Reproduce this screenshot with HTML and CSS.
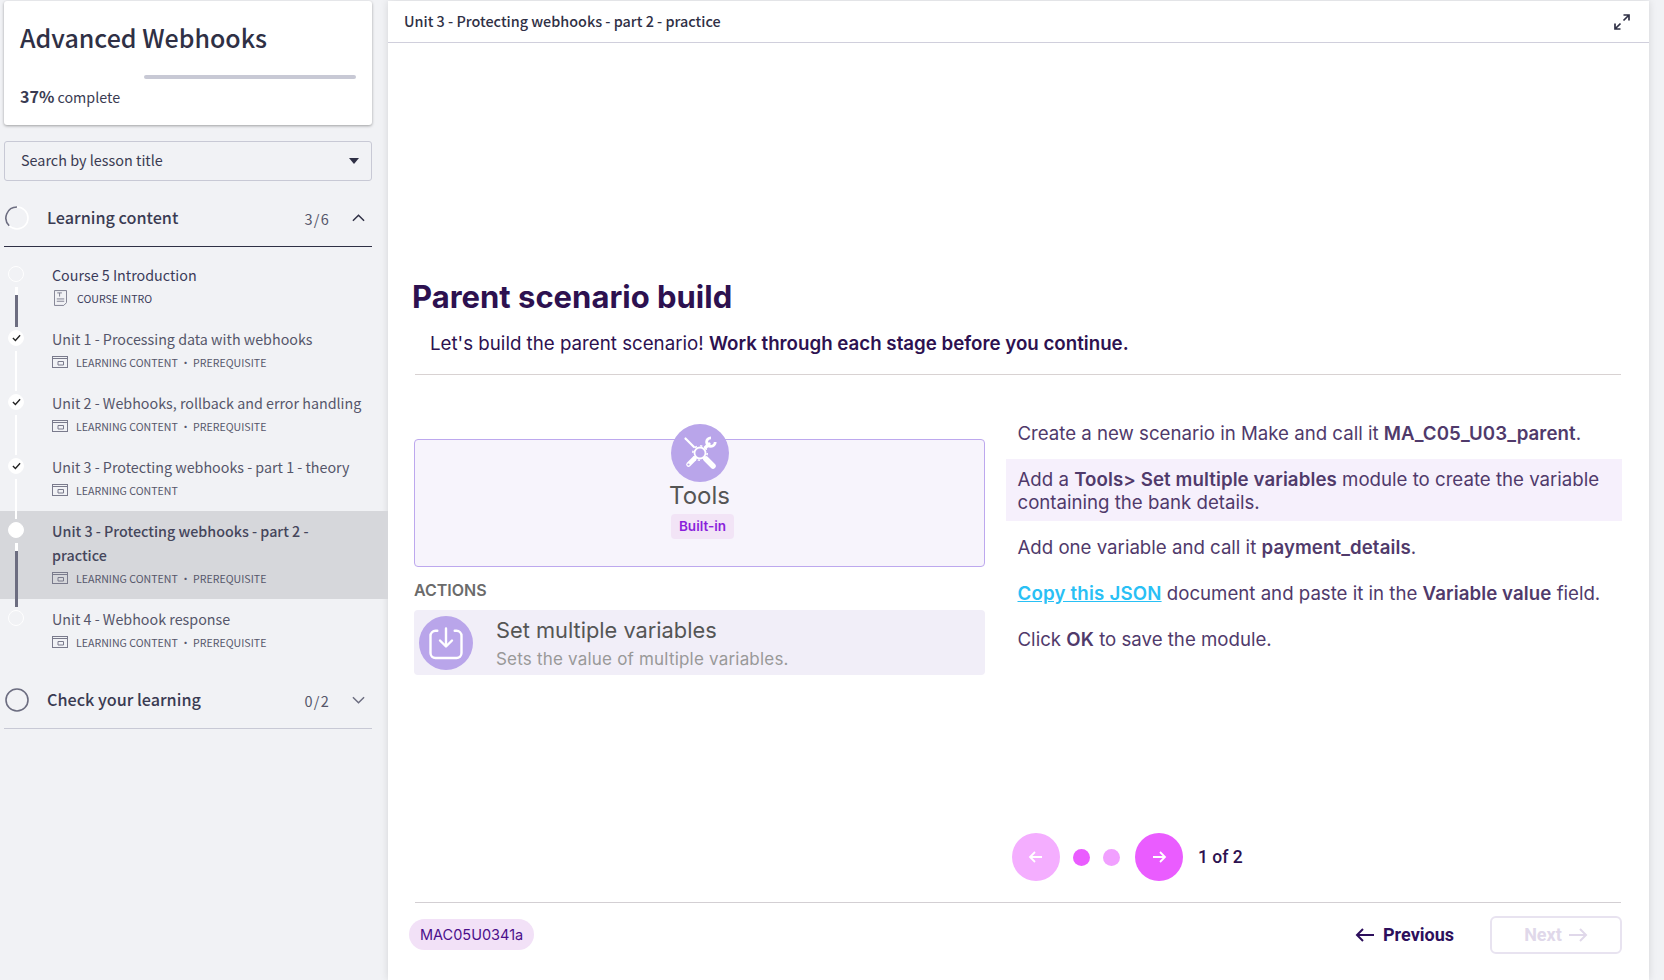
FILE: index.html
```html
<!DOCTYPE html>
<html lang="en">
<head>
    <meta charset="UTF-8">
    <meta name="viewport" content="width=device-width, initial-scale=1.0">
    <title>Advanced Webhooks</title>
    <link rel="stylesheet" href="styles.css">
</head>
<body>

    <aside class="sidebar">
        <div class="course-card">
            <h2>Advanced Webhooks</h2>
            <div class="progress-track"></div>
            <p class="progress-text"><b>37%</b> complete</p>
        </div>

        <div class="search-box">
            <span>Search by lesson title</span>
            <i class="caret"></i>
        </div>

        <div class="section-head">
            <svg class="ring" viewBox="0 0 24 24"><circle cx="12" cy="12" r="11" fill="none" stroke="#fff" stroke-width="1.6"/><path d="M12 1A11 11 0 0 0 4.2 19.8" fill="none" stroke="#6c6d80" stroke-width="1.6"/></svg>
            <span class="section-title">Learning content</span>
            <span class="section-count">3/6</span>
            <svg class="chevron" viewBox="0 0 14 8"><path d="M1 7l6-6 6 6" fill="none" stroke="#2f3045" stroke-width="1.6"/></svg>
        </div>

        <ul class="lessons">
            <li class="lesson lesson-first">
                <span class="dot"></span><span class="line line-dark"></span>
                <div class="lesson-title">Course 5 Introduction</div>
                <div class="lesson-meta">
                    <svg class="doc-icon" viewBox="0 0 14 17"><path d="M.5.5h13v13l-3 3H.5z" fill="none" stroke="#7a7b8c"/><path d="M3.500 3h5M6 3v4M3 9.500h8M3 12h8" fill="none" stroke="#7a7b8c"/></svg>
                    COURSE INTRO
                </div>
            </li>
            <li class="lesson">
                <span class="dot dot-done"><svg viewBox="0 0 10 8"><path d="M1 4l2.800 2.800L9 1" fill="none" stroke="#222" stroke-width="1.500"/></svg></span><span class="line"></span>
                <div class="lesson-title">Unit 1 - Processing data with webhooks</div>
                <div class="lesson-meta">
                    <svg class="slide-icon" viewBox="0 0 16 12"><rect x=".5" y=".5" width="15" height="11" fill="none" stroke="#7a7b8c"/><path d="M.5 2.500h15M6 9h5.500V5.500H6z" fill="none" stroke="#7a7b8c"/></svg>
                    LEARNING CONTENT · PREREQUISITE
                </div>
            </li>
            <li class="lesson">
                <span class="dot dot-done"><svg viewBox="0 0 10 8"><path d="M1 4l2.800 2.800L9 1" fill="none" stroke="#222" stroke-width="1.500"/></svg></span><span class="line"></span>
                <div class="lesson-title">Unit 2 - Webhooks, rollback and error handling</div>
                <div class="lesson-meta">
                    <svg class="slide-icon" viewBox="0 0 16 12"><rect x=".5" y=".5" width="15" height="11" fill="none" stroke="#7a7b8c"/><path d="M.5 2.500h15M6 9h5.500V5.500H6z" fill="none" stroke="#7a7b8c"/></svg>
                    LEARNING CONTENT · PREREQUISITE
                </div>
            </li>
            <li class="lesson">
                <span class="dot dot-done"><svg viewBox="0 0 10 8"><path d="M1 4l2.800 2.800L9 1" fill="none" stroke="#222" stroke-width="1.500"/></svg></span><span class="line"></span>
                <div class="lesson-title">Unit 3 - Protecting webhooks - part 1 - theory</div>
                <div class="lesson-meta">
                    <svg class="slide-icon" viewBox="0 0 16 12"><rect x=".5" y=".5" width="15" height="11" fill="none" stroke="#7a7b8c"/><path d="M.5 2.500h15M6 9h5.500V5.500H6z" fill="none" stroke="#7a7b8c"/></svg>
                    LEARNING CONTENT
                </div>
            </li>
            <li class="lesson lesson-active">
                <span class="dot dot-full"></span><span class="line line-dark line-long"></span>
                <div class="lesson-title">Unit 3 - Protecting webhooks - part 2 - practice</div>
                <div class="lesson-meta">
                    <svg class="slide-icon" viewBox="0 0 16 12"><rect x=".5" y=".5" width="15" height="11" fill="none" stroke="#7a7b8c"/><path d="M.5 2.500h15M6 9h5.500V5.500H6z" fill="none" stroke="#7a7b8c"/></svg>
                    LEARNING CONTENT · PREREQUISITE
                </div>
            </li>
            <li class="lesson">
                <span class="dot"></span>
                <div class="lesson-title">Unit 4 - Webhook response</div>
                <div class="lesson-meta">
                    <svg class="slide-icon" viewBox="0 0 16 12"><rect x=".5" y=".5" width="15" height="11" fill="none" stroke="#7a7b8c"/><path d="M.5 2.500h15M6 9h5.500V5.500H6z" fill="none" stroke="#7a7b8c"/></svg>
                    LEARNING CONTENT · PREREQUISITE
                </div>
            </li>
        </ul>

        <div class="section-head section-closed">
            <svg class="ring" viewBox="0 0 24 24"><circle cx="12" cy="12" r="11" fill="none" stroke="#6c6d80" stroke-width="1.600"/></svg>
            <span class="section-title">Check your learning</span>
            <span class="section-count">0/2</span>
            <svg class="chevron" viewBox="0 0 14 8"><path d="M1 1l6 6 6-6" fill="none" stroke="#6c6d80" stroke-width="1.600"/></svg>
        </div>
    </aside>

    <main class="main">
        <header class="topbar">
            <span>Unit 3 - Protecting webhooks - part 2 - practice</span>
            <svg class="expand" viewBox="0 0 16 16"><path d="M1 15l5.500-5.500M9.500 6.500L15 1M9.500 1H15v5.500M1 9.500V15h5.500" fill="none" stroke="#2f3045" stroke-width="1.700"/></svg>
        </header>

        <section class="slide">
            <h1>Parent scenario build</h1>
            <p class="intro">Let's build the parent scenario! <b>Work through each stage before you continue.</b></p>
            <hr class="rule">

            <div class="columns">
                <div class="module">
                    <div class="module-card">
                        <div class="module-icon">
                            <svg viewBox="0 0 36 36" fill="none" stroke="#fff" stroke-linecap="round">
                                <path d="M3.500 3.500l8.500 8.500" stroke-width="2.200"/>
                                <path d="M24 24l7 7" stroke-width="5.500"/>
                                <path d="M23.500 12.500l3.500-3.500" stroke-width="3.400"/>
                                <path d="M29 2.800A4.300 4.300 0 1 0 33.200 7" stroke-width="2.800" stroke-linecap="butt"/>
                                <path d="M12.500 23.500l-6 6" stroke-width="4.600"/>
                                <circle cx="6.500" cy="29.500" r="1.100" fill="#b9a5ea" stroke="none"/>
                                <circle cx="18" cy="18" r="5.500" stroke-width="1.800"/>
                                <circle cx="18" cy="18" r="7.200" stroke-width="1.500" stroke-dasharray="2.200 3.450" stroke-linecap="butt"/>
                            </svg>
                        </div>
                        <div class="module-name">Tools</div>
                        <span class="module-tag">Built-in</span>
                    </div>
                    <div class="actions-label">ACTIONS</div>
                    <div class="action">
                        <div class="action-icon">
                            <svg viewBox="0 0 34 34" fill="none" stroke="#fff" stroke-width="2.400" stroke-linecap="round" stroke-linejoin="round">
                                <path d="M8.300 4.800H6.500a5 5 0 0 0-5 5V27a5 5 0 0 0 5 5h21a5 5 0 0 0 5-5V9.800a5 5 0 0 0-5-5h-1.800"/>
                                <path d="M17 2.500V20M11 14.500l6 6 6-6"/>
                            </svg>
                        </div>
                        <div>
                            <div class="action-title">Set multiple variables</div>
                            <div class="action-sub">Sets the value of multiple variables.</div>
                        </div>
                    </div>
                </div>

                <div class="steps">
                    <p>Create a new scenario in Make and call it <b>MA_C05_U03_parent</b>.</p>
                    <p class="step-on">Add a <b>Tools&gt; Set multiple variables</b> module to create the variable containing the bank details.</p>
                    <p>Add one variable and call it <b>payment_details</b>.</p>
                    <p><a href="#">Copy this JSON</a> document and paste it in the <b>Variable value</b> field.</p>
                    <p>Click <b>OK</b> to save the module.</p>
                </div>
            </div>

            <div class="pager">
                <span class="pager-btn pager-off"><svg viewBox="0 0 16 16"><path d="M14 8H2M7 3L2 8l5 5" fill="none" stroke="#fff" stroke-width="1.800"/></svg></span>
                <span class="pager-dot"></span>
                <span class="pager-dot pager-dot-off"></span>
                <span class="pager-btn"><svg viewBox="0 0 16 16"><path d="M2 8h12M9 3l5 5-5 5" fill="none" stroke="#fff" stroke-width="1.800"/></svg></span>
                <span class="pager-text">1 of 2</span>
            </div>

            <hr class="rule rule-foot">

            <footer class="foot">
                <span class="code-tag">MAC05U0341a</span>
                <a class="prev" href="#">
                    <svg viewBox="0 0 20 14"><path d="M19 7H2M8 1L2 7l6 6" fill="none" stroke="#2d0f5c" stroke-width="2"/></svg>
                    Previous
                </a>
                <span class="next">
                    Next
                    <svg viewBox="0 0 20 14"><path d="M1 7h17M12 1l6 6-6 6" fill="none" stroke="#e0d8ea" stroke-width="2"/></svg>
                </span>
            </footer>
        </section>
    </main>

</body>
</html>
```

FILE: styles.css
```css
* {
    box-sizing: border-box;
}

html, body {
    height: 100%;
}

body {
    margin: 0;
    display: flex;
    overflow: hidden;
    background-color: #f1f2f5;
    font-family: 'Noto Sans CJK SC', 'Noto Sans', sans-serif;
    color: #3a3b52;
}

/* Sidebar */
.sidebar {
    width: 388px;
    flex: none;
}

.course-card {
    margin: 1px 16px 0 4px;
    height: 124px;
    padding: 20px 16px 0 16px;
    background-color: #fff;
    border-radius: 3px;
    box-shadow: 0 1px 3px rgba(0, 0, 0, 0.35);
}

.course-card h2 {
    margin: 0;
    height: 33px;
    font-size: 25px;
    line-height: 33px;
    font-weight: 500;
    color: #2f3045;
}

.progress-track {
    margin: 21px 0 0 124px;
    height: 4px;
    background-color: #c8c9d5;
    border-radius: 2px;
}

.progress-text {
    margin: 5px 0 0;
    font-size: 14.300px;
    line-height: 24px;
}

.progress-text b {
    font-size: 16px;
    font-weight: 700;
}

.search-box {
    margin: 16px 16px 0 4px;
    height: 40px;
    padding: 0 12px 0 16px;
    display: flex;
    align-items: center;
    justify-content: space-between;
    border: 1px solid #c8c9d5;
    border-radius: 3px;
    font-size: 14.400px;
}

.search-box span {
    margin-top: -4px;
}

.caret {
    width: 0;
    height: 0;
    border-left: 5px solid transparent;
    border-right: 5px solid transparent;
    border-top: 6px solid #2f3045;
}

.section-head {
    margin: 9px 16px 0 4px;
    height: 57px;
    display: flex;
    align-items: center;
    border-bottom: 1px solid #2f3045;
}

.section-closed {
    margin-top: 9px;
    border-bottom-color: #c8c9d5;
}

.ring {
    width: 24px;
    height: 24px;
    margin-left: 1px;
}

.section-title {
    margin: -2px 0 0 18px;
    font-size: 16.200px;
    font-weight: 500;
    flex: 1;
}

.section-count {
    font-size: 14.500px;
    letter-spacing: 1.200px;
    color: #55566a;
}

.chevron {
    width: 13px;
    height: 8px;
    margin: 0 7px 0 22px;
}

.lessons {
    list-style: none;
    margin: 8px 0 0;
    padding: 0;
}

.lesson {
    position: relative;
    padding: 8px 16px 10px 52px;
}

.lesson-active {
    padding-right: 40px;
    background-color: #d6d7db;
}

.lesson-title {
    font-size: 14.300px;
    line-height: 24px;
    color: #55566a;
}

.lesson-first .lesson-title {
    color: #3a3b5a;
}

.lesson-active .lesson-title {
    font-weight: 500;
    color: #45465c;
}

.lesson-meta {
    display: flex;
    align-items: center;
    gap: 8px;
    height: 22px;
    font-size: 10.600px;
    color: #55566a;
}

.lesson-first .lesson-meta {
    color: #3a3b5a;
}

.doc-icon {
    width: 13px;
    height: 16px;
    margin: 0 2px 0 2px;
}

.slide-icon {
    width: 16px;
    height: 12px;
}

/* timeline down the left of the lessons */
.dot {
    position: absolute;
    left: 8px;
    top: 11px;
    width: 16px;
    height: 16px;
    display: flex;
    align-items: center;
    justify-content: center;
    border: 1px solid #fff;
    border-radius: 50%;
}

.dot-done, .dot-full {
    background-color: #fff;
}

.dot-done svg {
    width: 9px;
    height: 8px;
}

.line {
    position: absolute;
    z-index: 1;
    left: 15px;
    top: 32px;
    width: 2px;
    height: 40px;
    background-color: #fff;
}

.line-dark {
    width: 3px;
    background: linear-gradient(#fff 8px, #6c6d80 8px);
}

.line-long {
    height: 64px;
}

/* Main panel */
.main {
    width: 1261px;
    flex: none;
    margin-top: 1px;
    display: flex;
    flex-direction: column;
    background-color: #fff;
    box-shadow: 0 0 8px rgba(0, 0, 0, 0.12);
}

.topbar {
    flex: none;
    height: 42px;
    padding: 0 19px 0 16px;
    display: flex;
    align-items: center;
    justify-content: space-between;
    border-bottom: 1px solid #d0cfdc;
    font-size: 14.400px;
    font-weight: 500;
    color: #2f3045;
}

.topbar span {
    margin-top: -2px;
}

.expand {
    width: 16px;
    height: 16px;
}

.slide {
    flex: 1;
    display: flex;
    flex-direction: column;
    padding: 0 27px 0 26px;
    font-family: Inter, sans-serif;
    color: #2d1150;
}

.slide h1 {
    margin: 234px 0 0 -2px;
    font-size: 31px;
    line-height: 40px;
    font-weight: 700;
}

.intro {
    margin: 15px 0 0 16px;
    font-size: 18.720px;
    line-height: 24px;
}

.intro b {
    font-weight: 600;
}

.rule {
    width: 1206px;
    height: 1px;
    margin: 18px 0 0 1px;
    border: 0;
    background-color: #d8d2d2;
}

.columns {
    display: grid;
    grid-template-columns: 571px 616px;
    column-gap: 21px;
    margin-top: 39px;
}

.module {
    padding-top: 25px;
}

.module-card {
    height: 128px;
    display: flex;
    flex-direction: column;
    align-items: center;
    border: 1px solid #bda8ee;
    border-radius: 4px;
    background-color: #f7f4fc;
}

.module-icon {
    width: 58px;
    height: 58px;
    margin-top: -16px;
    padding: 11px;
    border-radius: 50%;
    background-color: #b9a5ea;
}

.module-icon svg {
    display: block;
    width: 36px;
    height: 36px;
}

.module-name {
    margin-top: -1px;
    font-size: 24px;
    line-height: 30px;
    color: #555;
}

.module-tag {
    margin: 3px 0 0 6px;
    padding: 0 8px;
    height: 25px;
    line-height: 25px;
    font-size: 13.500px;
    font-weight: 600;
    color: #8b1fdc;
    background-color: #f2e4f6;
    border-radius: 4px;
}

.actions-label {
    margin-top: 12px;
    font-size: 16px;
    line-height: 22px;
    font-weight: 600;
    color: #6b6b6b;
}

.action {
    margin-top: 9px;
    height: 65px;
    padding-left: 5px;
    display: flex;
    align-items: center;
    gap: 23px;
    background-color: #f1eef8;
    border-radius: 4px;
}

.action-icon {
    width: 54px;
    height: 54px;
    padding: 10px;
    flex: none;
    border-radius: 50%;
    background-color: #b9a5ea;
}

.action-icon svg {
    display: block;
    width: 34px;
    height: 34px;
}

.action-title {
    padding-top: 2px;
    font-size: 21.800px;
    line-height: 30px;
    color: #555;
}

.action-sub {
    font-size: 17px;
    line-height: 28px;
    letter-spacing: 0.2px;
    color: #999;
}

.steps {
    display: flex;
    flex-direction: column;
    gap: 6.500px;
    color: #503a6b;
}

.steps p {
    margin: 0;
    padding: 8px 11.500px;
    font-size: 18.650px;
    line-height: 23px;
}

.steps b {
    font-weight: 600;
    letter-spacing: 0.1px;
}

.steps .step-on {
    margin: -1px 0 1px;
    padding-top: 9px;
    padding-bottom: 7px;
    background-color: #f6f0fc;
}

.steps p:last-child {
    margin-top: 1px;
}

.steps a {
    font-weight: 600;
    letter-spacing: 0.2px;
    color: #29c0f5;
}

.pager {
    margin: auto 0 0 598px;
    display: flex;
    align-items: center;
}

.pager-btn {
    width: 48px;
    height: 48px;
    display: flex;
    align-items: center;
    justify-content: center;
    border-radius: 50%;
    background-color: #ea5cff;
}

.pager-btn svg {
    width: 16px;
    height: 16px;
}

.pager-off {
    background-color: #f4aeff;
}

.pager-dot {
    width: 17px;
    height: 17px;
    margin-left: 13px;
    border-radius: 50%;
    background-color: #ea5cff;
}

.pager-dot-off {
    background-color: #f1a0ff;
}

.pager-dot + .pager-btn {
    margin-left: 15px;
}

.pager-text {
    margin-left: 15px;
    font-family: Roboto, sans-serif;
    font-size: 17.500px;
    font-weight: 500;
}

.rule-foot {
    margin-top: 21px;
    background-color: #d3cfd3;
}

.foot {
    flex: none;
    height: 63px;
    margin-bottom: 14px;
    display: flex;
    align-items: center;
    font-family: Roboto, sans-serif;
}

.code-tag {
    padding: 0 11px;
    height: 31px;
    line-height: 31px;
    margin-left: -5px;
    font-family: Inter, sans-serif;
    font-size: 14.500px;
    color: #4b0f8b;
    background-color: #f2e1f7;
    border-radius: 16px;
}

.prev {
    margin-left: auto;
    display: flex;
    align-items: center;
    gap: 8px;
    font-size: 18px;
    font-weight: 700;
    color: #2d0f5c;
    text-decoration: none;
}

.prev svg, .next svg {
    width: 20px;
    height: 14px;
}

.next {
    width: 132px;
    height: 38px;
    margin-left: 36px;
    display: flex;
    align-items: center;
    justify-content: center;
    gap: 6px;
    border: 2px solid #e8e3f0;
    border-radius: 6px;
    font-size: 18px;
    font-weight: 700;
    color: #e0d8ea;
}
```
